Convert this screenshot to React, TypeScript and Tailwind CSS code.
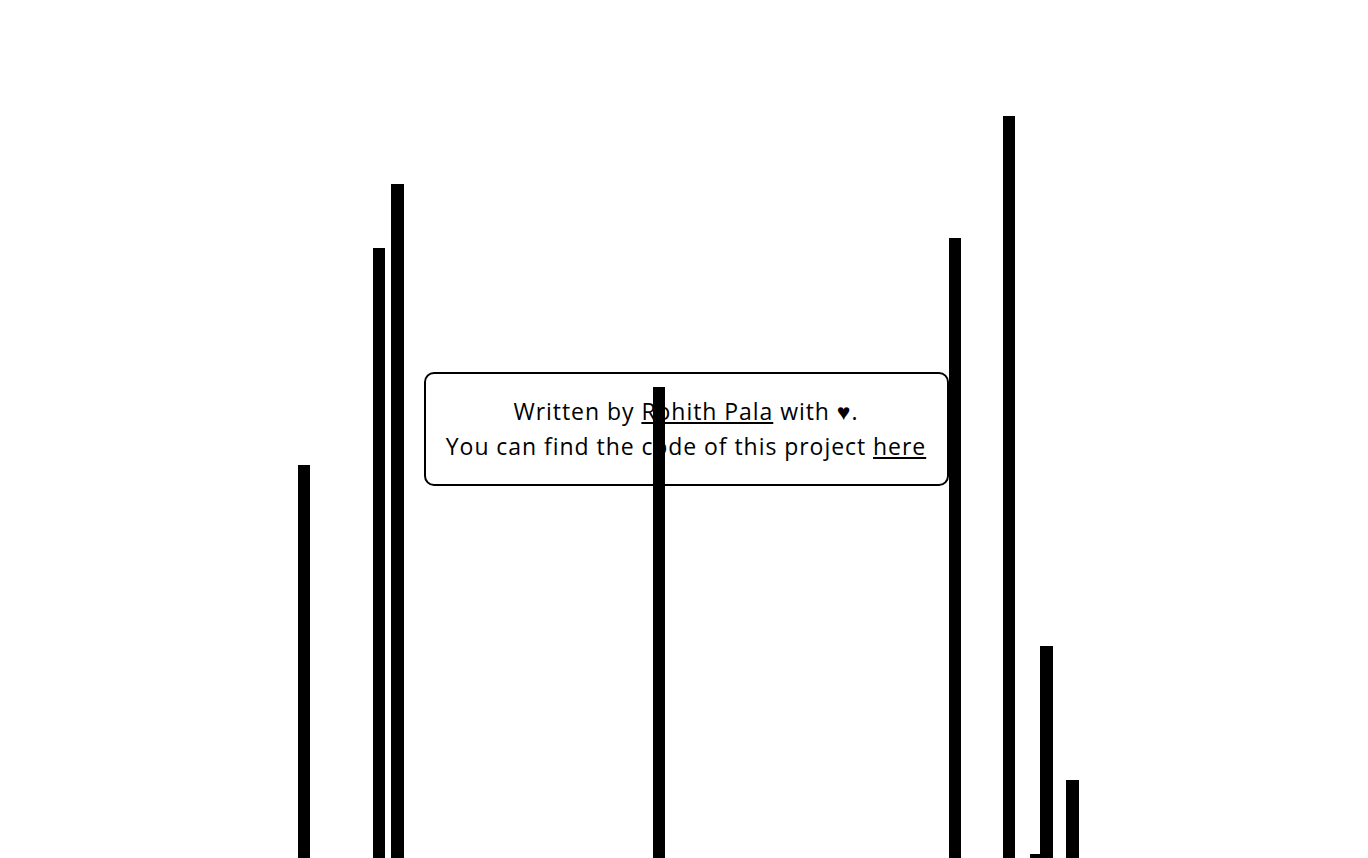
import React from 'react';

// bar positions taken from the current state of the array
const bars = [
    { left: 298, top: 465, width: 12 },
    { left: 373, top: 248, width: 12 },
    { left: 391, top: 184, width: 13 },
    { left: 653, top: 387, width: 12 },
    { left: 949, top: 238, width: 12 },
    { left: 1003, top: 116, width: 12 },
    { left: 1030, top: 854, width: 10 },
    { left: 1040, top: 646, width: 13 },
    { left: 1066, top: 780, width: 13 },
];

const App: React.FC = () => {
    return (
        <div className="relative w-full h-[858px] overflow-hidden bg-white" style={{ fontFamily: '"Open Sans", "Liberation Sans", sans-serif' }}>
            <div className="flex h-full items-center justify-center pl-[4px]">
                <div className="w-[525px] h-[114px] border-2 border-black rounded-[10px] flex flex-col items-center justify-center text-[23px] leading-[35px] text-black tracking-[0.95px]">
                    <p>Written by <a className="underline underline-offset-2" href="#">Rohith Pala</a> with ♥.</p>
                    <p>You can find the code of this project <a className="underline underline-offset-2" href="#">here</a></p>
                </div>
            </div>
            {bars.map((b, i) => (
                <div
                    key={i}
                    className="absolute bottom-0 bg-black"
                    style={{ left: b.left, top: b.top, width: b.width }}
                />
            ))}
        </div>
    );
};

export default App;
